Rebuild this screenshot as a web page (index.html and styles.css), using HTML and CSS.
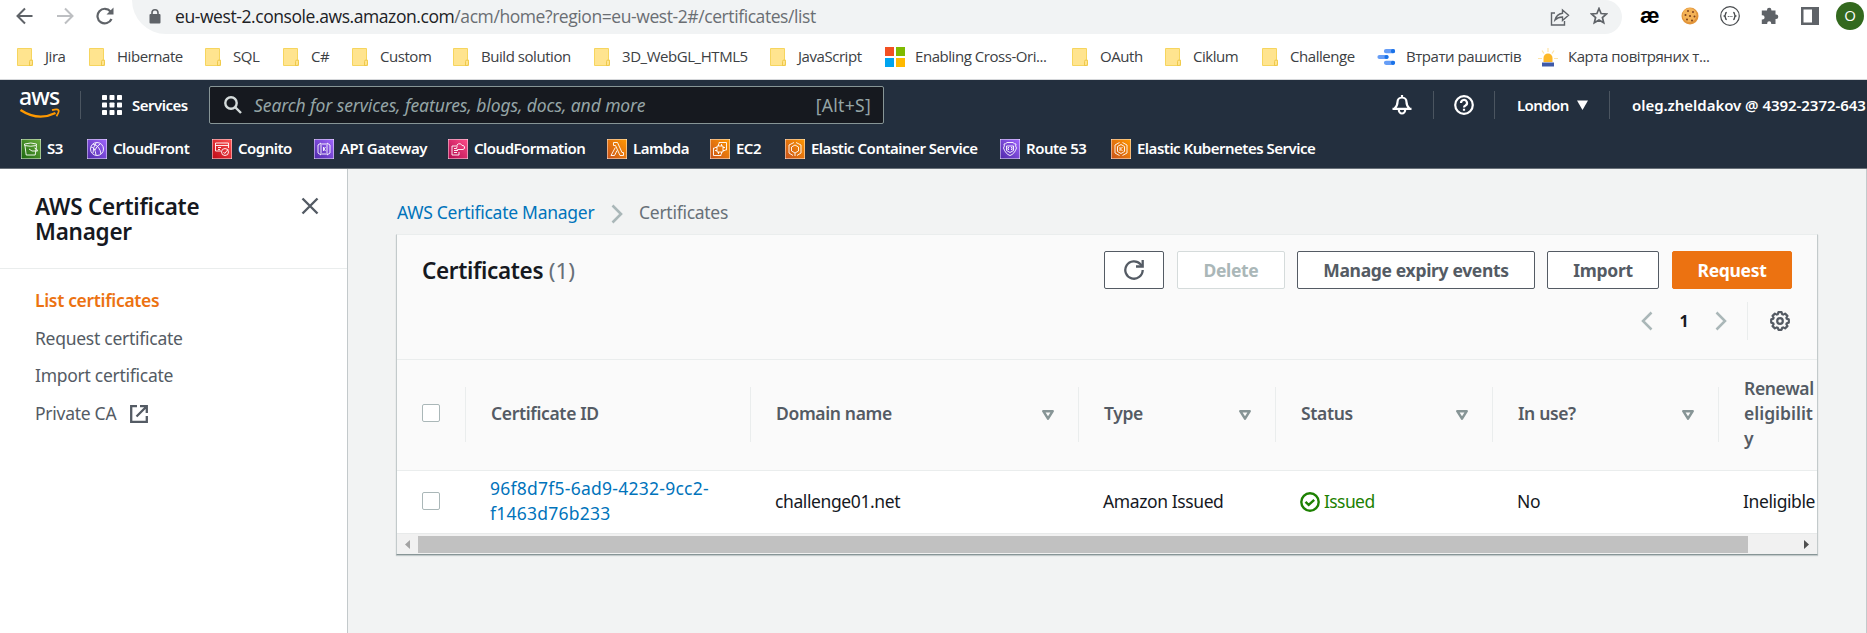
FILE: index.html
```
<!DOCTYPE html>
<html lang="en">
<head>
<meta charset="utf-8">
<title>AWS Certificate Manager</title>
<link rel="stylesheet" href="styles.css">
</head>
<body>
<svg class="defs" width="0" height="0">
  <defs>
    <linearGradient id="gGreen" x1="0" y1="1" x2="1" y2="0"><stop offset="0" stop-color="#1b660f"/><stop offset="1" stop-color="#6cae3e"/></linearGradient>
    <linearGradient id="gPurple" x1="0" y1="1" x2="1" y2="0"><stop offset="0" stop-color="#4d27a8"/><stop offset="1" stop-color="#a166ff"/></linearGradient>
    <linearGradient id="gRed" x1="0" y1="1" x2="1" y2="0"><stop offset="0" stop-color="#bd0816"/><stop offset="1" stop-color="#ff5252"/></linearGradient>
    <linearGradient id="gPink" x1="0" y1="1" x2="1" y2="0"><stop offset="0" stop-color="#b0084d"/><stop offset="1" stop-color="#ff4f8b"/></linearGradient>
    <linearGradient id="gOrange" x1="0" y1="1" x2="1" y2="0"><stop offset="0" stop-color="#c8511b"/><stop offset="1" stop-color="#ff9900"/></linearGradient>
    <symbol id="folder" viewBox="0 0 16 18"><path d="M.5.5h14v11.5h1v5.500h-15z" fill="#ffe48f" stroke="#f6d55e"/><path d="M12.500 17v-3.500q0-1.500 1.500-1.500t1.500 1.500v2.500q0 1.500-1.500 1.500h-2" fill="#ffe48f" stroke="#efc94a"/></symbol>
    <symbol id="sort" viewBox="0 0 12 10"><path d="M1.300 1.200h9.400L6 8.600z" fill="none" stroke="#879596" stroke-width="2.500" stroke-linejoin="round"/></symbol>
  </defs>
</svg>

<header class="browser">
  <div class="toolbar">
    <svg class="nav-ic" width="18" height="18" viewBox="0 0 18 18" fill="none" stroke="#5f6368" stroke-width="2"><path d="M16.500 9H2M9 1.500 1.500 9 9 16.500"/></svg>
    <svg class="nav-ic" width="18" height="18" viewBox="0 0 18 18" fill="none" stroke="#bdbfc2" stroke-width="2"><path d="M1 9h15M9 1.500 16.500 9 9 16.500"/></svg>
    <svg class="nav-ic reload" width="18" height="18" viewBox="0 0 18 18" fill="none" stroke="#5f6368" stroke-width="2.200"><path d="M15.500 12A7.300 7.300 0 1 1 14.500 4.500"/><path d="M17.500.5v7h-7z" fill="#5f6368" stroke="none"/></svg>
    <div class="omnibox">
      <svg width="12" height="15" viewBox="0 0 12 15"><rect x=".5" y="5" width="11" height="9.500" rx="1" fill="#5f6368"/><path d="M3 6V3.800a3 3 0 0 1 6 0V6" fill="none" stroke="#5f6368" stroke-width="1.600"/></svg>
      <span class="url">eu-west-2.console.aws.amazon.com<span class="path">/acm/home?region=eu-west-2#/certificates/list</span></span>
      <svg class="share" width="20" height="18" viewBox="0 0 20 18" fill="none" stroke="#5f6368" stroke-width="1.400"><path d="M5 5H1.500v12h13v-4"/><path d="M12.500 2v3.200Q6.500 6 5 12q3-3 7.500-3v3.500l6-5.200z"/></svg>
      <svg width="18" height="18" viewBox="0 0 18 18" fill="none" stroke="#5f6368" stroke-width="1.700"><path d="m9 1.500 2.100 5 5.400.5-4.100 3.500 1.300 5.300L9 13l-4.700 2.800 1.300-5.300L1.500 7l5.400-.5z"/></svg>
    </div>
    <div class="extensions">
      <span class="ae">æ</span>
      <svg width="18" height="18" viewBox="0 0 18 18"><circle cx="9" cy="9" r="8.500" fill="#e2953a"/><circle cx="8.500" cy="8" r="7" fill="#f3b257"/><g fill="#7b3f1c"><circle cx="7" cy="4" r="1"/><circle cx="12" cy="5" r="1"/><circle cx="4.500" cy="8" r="1"/><circle cx="9" cy="9" r="1.100"/><circle cx="13.500" cy="9.500" r="1"/><circle cx="6" cy="12.500" r="1"/><circle cx="11" cy="13.500" r="1"/></g></svg>
      <svg width="20" height="20" viewBox="0 0 20 20" fill="none" stroke="#4a4d50" stroke-width="1.200"><circle cx="10" cy="10" r="9.300"/><path stroke-width="1.400" d="M6.800 6.500q-1.300 0-1.300 1.500T4.500 10q1 .5 1 2t1.300 1.500M13.200 6.500q1.300 0 1.300 1.500t1 2q-1 .5-1 2t-1.300 1.500"/><path d="M7.800 10.500h4.600" stroke-dasharray="1 .8"/></svg>
      <svg width="18" height="18" viewBox="0 0 18 18" fill="#5f6368"><path d="M6 3.500V3a2.200 2.200 0 0 1 4.400 0v.5h4.100v4.100h.6a2.200 2.200 0 0 1 0 4.400h-.6V17h-4.300v-.8a2 2 0 0 0-4 0v.8H.8v-4.500h.7a2.100 2.100 0 0 0 0-4.200H.8V3.500z"/></svg>
      <svg width="18" height="18" viewBox="0 0 18 18"><path d="M0 0h18v18H0zM2.500 2.500v13H11v-13z" fill="#5f6368" fill-rule="evenodd"/></svg>
      <span class="avatar">O</span>
    </div>
  </div>
  <nav class="bookmarks">
    <a><svg class="fold"><use href="#folder"/></svg><span>Jira</span></a>
    <a><svg class="fold"><use href="#folder"/></svg><span>Hibernate</span></a>
    <a><svg class="fold"><use href="#folder"/></svg><span>SQL</span></a>
    <a><svg class="fold"><use href="#folder"/></svg><span>C#</span></a>
    <a><svg class="fold"><use href="#folder"/></svg><span>Custom</span></a>
    <a><svg class="fold"><use href="#folder"/></svg><span>Build solution</span></a>
    <a><svg class="fold"><use href="#folder"/></svg><span>3D_WebGL_HTML5</span></a>
    <a><svg class="fold"><use href="#folder"/></svg><span>JavaScript</span></a>
    <a class="site"><svg width="20" height="20" viewBox="0 0 20 20"><path fill="#f25022" d="M0 0h9v9H0z"/><path fill="#7fba00" d="M11 0h9v9h-9z"/><path fill="#00a4ef" d="M0 11h9v9H0z"/><path fill="#ffb900" d="M11 11h9v9h-9z"/></svg><span>Enabling Cross-Ori...</span></a>
    <a><svg class="fold"><use href="#folder"/></svg><span>OAuth</span></a>
    <a><svg class="fold"><use href="#folder"/></svg><span>Ciklum</span></a>
    <a><svg class="fold"><use href="#folder"/></svg><span>Challenge</span></a>
    <a class="site"><svg width="19" height="16" viewBox="0 0 19 16" stroke-linecap="round" stroke-width="4.200" fill="none"><path stroke="#669df6" d="M9 2.200h7M2.500 8h7M9 13.800h7"/><path stroke="#1a73e8" d="M16 2.200h.01M9.500 8h.01M16 13.800h.01"/></svg><span>Втрати рашистів</span></a>
    <a class="site"><svg width="20" height="20" viewBox="0 0 20 20"><path d="M10 1v4M4 3.500l2 3M16 3.500l-2 3M0 11.500h4M16 11.500h4" stroke="#fde3a8" stroke-width="1.200"/><path d="M5.500 15v-4a4.500 4.500 0 0 1 9 0v4z" fill="#fdb827"/><path d="M4 15.500h12V19.500H4z" fill="#3f5aa8"/></svg><span>Карта повітряних т...</span></a>
  </nav>
</header>

<header class="console">
  <div class="console-top">
    <div class="logo"><span>aws</span><svg width="42" height="12" viewBox="0 0 42 12" fill="none" stroke="#ff9900"><path d="M1.500 2Q19 13.500 36.500 5" stroke-width="2.400"/><path d="M33 2.200q5.500-1.500 6.500 0t-2 6" stroke-width="1.800"/></svg></div>
    <i class="sep s1"></i>
    <svg class="apps" width="20" height="20" viewBox="0 0 20 20" fill="#fff"><g id="r"><rect width="5" height="5" rx=".7"/><rect x="7.500" width="5" height="5" rx=".7"/><rect x="15" width="5" height="5" rx=".7"/></g><use href="#r" y="7.500"/><use href="#r" y="15"/></svg>
    <span class="services">Services</span>
    <div class="search">
      <svg width="18" height="18" viewBox="0 0 18 18" fill="none" stroke="#d5dbdb" stroke-width="2.400"><circle cx="7" cy="7" r="5.700"/><path d="m11 11 6 6"/></svg>
      <span class="ph">Search for services, features, blogs, docs, and more</span>
      <span class="key">[Alt+S]</span>
    </div>
    <div class="account">
      <svg width="20" height="20" viewBox="0 0 20 20" fill="none" stroke="#fff" stroke-width="2.200"><path d="M10 0v2M2.500 13.500Q5.500 11 5.500 7a4.500 4.500 0 0 1 9 0q0 4 3 6.500M.5 13.800h19M6.800 14.500a3.200 4 0 0 0 6.400 0"/></svg>
      <i class="sep s2"></i>
      <svg width="20" height="20" viewBox="0 0 20 20" fill="none" stroke="#fff" stroke-width="2.200"><circle cx="10" cy="10" r="8.800"/><path d="M7 8a3 3 0 1 1 4.500 2.500Q10 11.300 10 12.500M10 13.800v2"/></svg>
      <i class="sep s3"></i>
      <span class="london">London</span>
      <svg class="caret" width="11" height="10" viewBox="0 0 11 10"><path d="M0 .5h11L5.500 10z" fill="#fff"/></svg>
      <i class="sep s4"></i>
      <span class="user">oleg.zheldakov @ 4392-2372-643</span>
    </div>
  </div>
  <nav class="favorites">
    <a><svg viewBox="0 0 20 20"><rect width="20" height="20" fill="url(#gGreen)"/><path d="M3.500 5q6.500-2 12 0v1.500q-5.500 1.500-12 0zM4 7l1.200 9h9L15.500 7M8 10l3 2h5.500q0-2-3-3"/></svg><span>S3</span></a>
    <a><svg viewBox="0 0 20 20"><rect width="20" height="20" fill="url(#gPurple)"/><circle cx="10" cy="10" r="6.500"/><path d="M4 8q4 0 5 8M6 5q7 2 8 10M9 4q-3 4-3 10M13 5q-4 3-5 6"/></svg><span>CloudFront</span></a>
    <a><svg viewBox="0 0 20 20"><rect width="20" height="20" fill="url(#gRed)"/><path d="M9 12H3.500V4h13v5M3.500 6.500h13M6 8.500h3M6 10.500h2"/><circle cx="13" cy="13" r="3.500"/><path d="m11.500 13 1.200 1.500 3.300-4"/></svg><span>Cognito</span></a>
    <a><svg viewBox="0 0 20 20"><rect width="20" height="20" fill="url(#gPurple)"/><path d="M7 4v12l-3-2V6zM13 4v12l3-2V6zM9.500 8v4M11.500 8l-1.500 2 1.500 2M8 5h4M8 15h4"/></svg><span>API Gateway</span></a>
    <a><svg viewBox="0 0 20 20"><rect width="20" height="20" fill="url(#gPink)"/><path d="M8 7H4v9h7v-3M6 9.500h2M6 11.500h4M6 13.500h3M9.500 10.500H15q2-.5 1.500-2.500T14 6.500Q13 4 10.500 4.800T9 8q-1.500 2 .5 2.500z"/></svg><span>CloudFormation</span></a>
    <a><svg viewBox="0 0 20 20"><rect width="20" height="20" fill="url(#gOrange)"/><path d="M8.300 8.500 4 16.500h3.500l2.500-5M6.500 3.500v3h2l4.500 10h3.500v-3h-1.500L10.500 3.500z"/></svg><span>Lambda</span></a>
    <a><svg viewBox="0 0 20 20"><rect width="20" height="20" fill="url(#gOrange)"/><path d="M9 5V3.500h7.500V11H15M3.500 9v7.500H11V15M3.500 9H5M7 7h6v6H7zM8.500 5v2M11.500 5v2M8.500 13v2M11.500 13v2M5 8.500h2M5 11.500h2M13 8.500h2M13 11.500h2"/></svg><span>EC2</span></a>
    <a><svg viewBox="0 0 20 20"><rect width="20" height="20" fill="url(#gOrange)"/><path d="M9 3.500 4 6v8l4 2.500M11 3.500 16 6v8l-4 2.500M10 6l3.500 2v4L10 14l-3.500-2V8zM10 14v3"/></svg><span>Elastic Container Service</span></a>
    <a><svg viewBox="0 0 20 20"><rect width="20" height="20" fill="url(#gPurple)"/><path d="M4 5q2 0 3-1.500h6Q14 5 16 5q-1 2 .5 4-2 6-6.500 7.500Q5.500 15 3.500 9 5 7 4 5zM6.500 7h7v4.500l-3.500 2-3.500-2zM9 8.500H8v2h1M11 8.500h1v2h-1"/></svg><span>Route 53</span></a>
    <a><svg viewBox="0 0 20 20"><rect width="20" height="20" fill="url(#gOrange)"/><path d="M8.500 3.500 4 6v8l4.500 2.500M11.500 3.500 16 6v8l-4.500 2.500M10 5.500l3.500 2v5l-3.500 2-3.500-2v-5zM9 8v4M11.500 8 9.500 10l2 2"/></svg><span>Elastic Kubernetes Service</span></a>
  </nav>
</header>

<div class="page">
  <aside class="sidebar">
    <div class="side-head">
      <h2>AWS Certificate<br>Manager</h2>
      <svg width="18" height="18" viewBox="0 0 18 18" stroke="#545b64" stroke-width="2.400"><path d="m1.500 1.500 15 15M16.500 1.500l-15 15"/></svg>
    </div>
    <nav class="side-nav">
      <a class="active">List certificates</a>
      <a class="n2">Request certificate</a>
      <a class="n3">Import certificate</a>
      <a class="n4"><span>Private CA</span><svg width="18" height="18" viewBox="0 0 18 18" fill="none" stroke="#545b64" stroke-width="2.300"><path d="M7 1.200H1.200v15.600h15.600V11M10 1.200h6.800V8M16.500 1.500 6.500 11.500"/></svg></a>
    </nav>
  </aside>
  <main class="main">
    <div class="crumbs">
      <a>AWS Certificate Manager</a>
      <svg width="12" height="20" viewBox="0 0 12 20" fill="none" stroke="#aab7b8" stroke-width="2.600"><path d="m1.500 1.500 8.500 8.500-8.500 8.500"/></svg>
      <span>Certificates</span>
    </div>
    <section class="panel">
      <div class="panel-head">
        <div class="head-row">
          <h1>Certificates <span>(1)</span></h1>
          <div class="buttons">
            <button class="b-refresh"><svg width="20" height="20" viewBox="0 0 20 20" fill="none" stroke="#545b64" stroke-width="2.300"><path d="M18.700 10A8.700 8.700 0 1 1 16.500 4.200L18 6"/><path d="M18.700 0v6.500H12"/></svg></button>
            <button class="b-delete">Delete</button>
            <button class="b-manage">Manage expiry events</button>
            <button class="b-import">Import</button>
            <button class="b-request">Request</button>
          </div>
        </div>
        <div class="pager">
          <svg width="12" height="20" viewBox="0 0 12 20" fill="none" stroke="#aab7b8" stroke-width="2.500"><path d="M10.500 1.500 2 10l8.500 8.500"/></svg>
          <b>1</b>
          <svg width="12" height="20" viewBox="0 0 12 20" fill="none" stroke="#aab7b8" stroke-width="2.500"><path d="M1.500 1.500 10 10l-8.500 8.500"/></svg>
          <i></i>
          <svg class="gear" width="20" height="20" viewBox="0 0 20 20" fill="none" stroke="#545b64" stroke-width="2.200" stroke-linejoin="round"><circle cx="10" cy="10" r="2.800"/><path d="M8.400 1.200h3.200l.6 2 1 .4 1.900-1 2.300 2.300-1 1.900.4 1 2 .6v3.200l-2 .6-.4 1 1 1.900-2.300 2.300-1.900-1-1 .4-.6 2H8.400l-.6-2-1-.4-1.900 1-2.300-2.300 1-1.900-.4-1-2-.6V8.400l2-.6.4-1-1-1.900 2.300-2.300 1.900 1 1-.4z"/></svg>
        </div>
      </div>
      <div class="row thead">
        <div class="cell"><i class="check"></i></div>
        <div class="cell"><span class="c-id">Certificate ID</span></div>
        <div class="cell"><span>Domain name</span><svg class="sort"><use href="#sort"/></svg></div>
        <div class="cell"><span>Type</span><svg class="sort"><use href="#sort"/></svg></div>
        <div class="cell"><span>Status</span><svg class="sort"><use href="#sort"/></svg></div>
        <div class="cell"><span>In use?</span><svg class="sort"><use href="#sort"/></svg></div>
        <div class="cell"><span>Renewal<br><span class="elig">eligibilit</span><br>y</span></div>
      </div>
      <div class="row tbody">
        <div class="cell"><i class="check"></i></div>
        <div class="cell"><a>96f8d7f5-6ad9-4232-9cc2-<br>f1463d76b233</a></div>
        <div class="cell"><span>challenge01.net</span></div>
        <div class="cell"><span>Amazon Issued</span></div>
        <div class="cell ok"><svg width="20" height="20" viewBox="0 0 20 20" fill="none" stroke="#1d8102" stroke-width="2.400"><circle cx="10" cy="10" r="8.700"/><path d="m5.500 9.800 3.200 3 5.500-5"/></svg><span>Issued</span></div>
        <div class="cell"><span>No</span></div>
        <div class="cell"><span>Ineligible</span></div>
      </div>
      <div class="scrollbar">
        <svg width="5" height="9" viewBox="0 0 5 9"><path d="M5 0v9L0 4.500z" fill="#a3a3a3"/></svg>
        <div class="thumb"></div>
        <svg width="5" height="9" viewBox="0 0 5 9"><path d="M0 0v9l5-4.500z" fill="#505050"/></svg>
      </div>
    </section>
  </main>
</div>
</body>
</html>
```
FILE: styles.css
```
* { box-sizing: border-box; }
html, body { margin: 0; height: 633px; overflow: hidden; }
body { font: 17.5px/25px "Noto Sans", "Open Sans", sans-serif; color: #16191f; background: #f2f3f3; }
svg { display: block; flex: none; }
.defs { position: absolute; }
h1, h2 { margin: 0; }
span, a, button { white-space: nowrap; }

/* browser chrome */
.browser { height: 80px; background: #fff; border-bottom: 1px solid #d5d7da; font-family: "Open Sans", "Noto Sans", sans-serif; }
.toolbar { display: flex; height: 34px; align-items: center; padding-left: 16px; }
.nav-ic { margin: -3px 22px 0 0; }
.omnibox { display: flex; align-items: center; width: 1490px; height: 34px; margin-left: -4px; padding: 0 14px 2px 17px; background: #f1f3f4; border-radius: 0 17px 17px 34px / 0 17px 17px 34px; }
.url { margin-left: 14px; font-size: 17.5px; letter-spacing: -.42px; color: #202124; }
.path { color: #6a6e73; }
.share { margin: 2px 20px 0 auto; }
.extensions { display: flex; align-items: center; height: 34px; padding-bottom: 2px; margin-left: 18px; }
.extensions svg { margin-right: 22px; }
.extensions svg:nth-of-type(2) { margin: 0 21px 0 -1px; }
.extensions svg:nth-of-type(4) { margin-right: 17px; }
.ae { width: 41px; font: bold 22px/20px "Liberation Sans", sans-serif; color: #000; }
.avatar { width: 28px; height: 28px; border-radius: 50%; background: #33691e; color: #fff; font-size: 15px; line-height: 27px; text-align: center; }
.bookmarks { display: grid; grid-template-columns: 72px 116px 78px 69px 101px 141px 176px 115px 187px 93px 97px 115px 161px 190px; height: 45px; padding-left: 17px; align-items: center; font-size: 15px; letter-spacing: -.45px; color: #3c4043; }
.bookmarks a { display: flex; align-items: center; gap: 12px; }
.bookmarks .site { gap: 10px; }
.fold { width: 16px; height: 18px; }

/* console header */
.console { height: 89px; background: #232f3e; border-bottom: 1px solid #687078; color: #fff; font-size: 15px; font-weight: 600; letter-spacing: -.35px; overflow: hidden; }
.console-top { display: flex; align-items: center; height: 50px; padding-left: 19px; }
.logo { width: 42px; }
.logo span { display: block; height: 18px; font: 500 23px/10px "Noto Sans", sans-serif; letter-spacing: -.8px; }
.logo svg { margin-top: -1px; }
.sep { flex: none; width: 1px; height: 28px; background: #4b5560; }
.s1 { margin-left: 19px; }
.apps { margin-left: 21px; }
.services { width: 77px; margin-left: 10px; letter-spacing: -.5px; }
.search { display: flex; align-items: center; width: 675px; height: 38px; padding: 0 12px 0 14px; background: #16191f; border: 1px solid #879596; border-radius: 2px; font-weight: 400; font-size: 17.5px; color: #95a5a6; }
.ph { margin-left: 12px; font-style: italic; letter-spacing: -.09px; }
.key { margin-left: auto; letter-spacing: .3px; }
.account { display: flex; align-items: center; margin-left: 508px; }
.s2 { margin: 0 20px 0 21px; }
.s3 { margin: 0 22px 0 20px; }
.london { width: 59px; margin-right: 1px; letter-spacing: -.6px; }
.s4 { margin: 0 22px 0 21px; }
.user { letter-spacing: -.04px; }
.favorites { display: grid; grid-template-columns: 66px 125px 102px 134px 159px 103px 75px 215px 111px 220px; align-items: center; height: 38px; padding-left: 21px; letter-spacing: -.5px; }
.favorites a { display: flex; align-items: center; gap: 6px; }
.favorites span { margin-top: -1px; }
.favorites svg { width: 20px; height: 20px; fill: none; stroke: #fff; stroke-width: .9; }

/* layout */
.page { display: flex; height: 464px; }
.sidebar { flex: none; width: 348px; background: #fff; border-right: 1px solid #c3c9cb; }
.side-head { display: flex; justify-content: space-between; height: 100px; padding: 25px 28px 0 35px; border-bottom: 1px solid #eaeded; }
.side-head h2 { font-size: 22.5px; line-height: 25px; font-weight: 600; letter-spacing: -.25px; }
.side-head svg { margin-top: 3px; }
.side-nav { display: flex; flex-direction: column; gap: 12.500px; padding: 19px 0 0 35px; color: #545b64; letter-spacing: -.27px; }
.active { color: #ec7211; font-weight: 600; letter-spacing: -.33px; }
.n4 { display: flex; align-items: center; gap: 14px; }
.n4 svg { margin-top: 1px; }
.main { flex: 1; padding: 31px 0 0 48px; background: #f2f3f3; border-right: 1px solid #c3c9cb; }
.crumbs { display: flex; align-items: center; height: 25px; margin-bottom: 9px; padding-left: 1px; color: #687078; letter-spacing: -.27px; }
.crumbs a { width: 198px; color: #0073bb; }
.crumbs svg { margin: 3px 16px 0 16px; }
.panel { width: 1422px; height: 321px; background: #fafafa; border: 1px solid #c3cacb; border-top-color: #eaeded; border-bottom: 1px solid #879596; box-shadow: 0 1px 1px #c3cacb; overflow: hidden; }
.panel-head { height: 125px; border-bottom: 1px solid #eaeded; }
.head-row { display: flex; justify-content: space-between; padding: 16px 25px 0 25px; }
h1 { font-size: 22.5px; line-height: 40px; font-weight: 600; letter-spacing: -.35px; }
h1 span { font-weight: 400; color: #687078; letter-spacing: 0; }
.buttons { display: flex; }
button { height: 38px; margin: 0; padding: 0; background: #fff; border: 1px solid #545b64; border-radius: 2px; color: #545b64; font: 700 17.5px/25px "Noto Sans", sans-serif; letter-spacing: -.33px; }
.b-refresh { width: 60px; padding-left: 19px; margin-right: 13px; }
.b-delete { width: 108px; margin-right: 12px; border-color: #d5dbdb; color: #aab7b8; }
.b-manage { width: 238px; margin-right: 12px; }
.b-import { width: 112px; margin-right: 13px; }
.b-request { width: 120px; background: #ec7211; border-color: #ec7211; color: #fff; }
.pager { display: flex; align-items: center; justify-content: flex-end; height: 38px; margin-top: 11px; padding-right: 27px; }
.pager b { width: 62px; text-align: center; font-size: 16px; }
.pager i { width: 1px; height: 38px; margin: 0 22px 0 20px; background: #eaeded; }
.row { display: grid; grid-template-columns: 68px 285px 328px 197px 217px 226px 100px; }
.cell { display: flex; align-items: center; }
.thead { height: 111px; border-bottom: 1px solid #eaeded; color: #545b64; font-weight: 600; letter-spacing: -.35px; }
.thead .cell { height: 55px; margin-top: 27px; padding: 0 24px 0 25px; border-left: 1px solid #eaeded; }
.thead .cell > span { margin-top: -2px; }
.thead .cell:first-child { border: 0; padding: 0 0 3px 25px; }
.elig { letter-spacing: 0; }
.sort { width: 12px; height: 10px; margin-left: auto; }
.check { width: 18px; height: 18px; background: #fff; border: 1px solid #aab7b8; border-radius: 2px; }
.tbody { height: 62px; background: #fff; letter-spacing: -.4px; }
.tbody .cell { padding: 0 0 2px 25px; }
.tbody .cell:first-child { padding: 0 0 3px 25px; }
.tbody a { color: #0073bb; letter-spacing: .25px; }
.tbody .ok { gap: 4px; color: #1d8102; letter-spacing: -.6px; }
.ok svg { margin-top: 2px; }
.scrollbar { display: flex; align-items: center; height: 21px; padding-left: 8px; background: #f1f1f1; border-top: 1px solid #e8eaea; }
.thumb { width: 1330px; height: 17px; margin: 0 56px 0 8px; background: #c1c1c1; }
```
